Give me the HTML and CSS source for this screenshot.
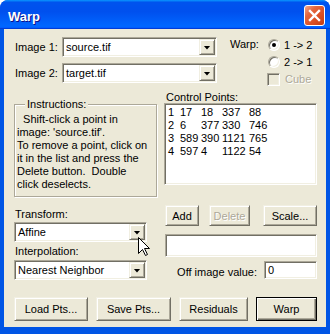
FILE: index.html
```html
<!DOCTYPE html>
<html>
	<head>
		<meta charset="UTF-8">
		<title>Warp</title>
		<link rel="stylesheet" href="styles.css">
	</head>
	<body>
		<div class="window">
			<div class="titlebar">
				<span class="title">Warp</span>
				<span class="close">
					<svg width="19" height="19" viewBox="0 0 19 19"><path d="M5 5 L14 14 M14 5 L5 14" stroke="#fff" stroke-width="2.4" stroke-linecap="square"/></svg>
				</span>
			</div>
			<div class="content">
				<div class="top">
					<div class="files">
						<div class="file-row">
							<span class="file-label">Image 1:</span>
							<div class="combo sunken file-combo"><span class="combo-text">source.tif</span><span class="combo-btn"><i></i></span></div>
						</div>
						<div class="file-row">
							<span class="file-label">Image 2:</span>
							<div class="combo sunken file-combo"><span class="combo-text">target.tif</span><span class="combo-btn"><i></i></span></div>
						</div>
					</div>
					<div class="warp-opts">
						<span class="warp-label">Warp:</span>
						<div class="opts">
							<div class="opt"><span class="radio checked"></span>1 -&gt; 2</div>
							<div class="opt"><span class="radio"></span>2 -&gt; 1</div>
							<div class="opt opt-check disabled"><span class="check"></span>Cube</div>
						</div>
					</div>
				</div>

				<div class="middle">
					<div class="col-left">
						<div class="group">
							<span class="legend">Instructions:</span>
							&nbsp;&nbsp;Shift-click a point in<br>
							image: 'source.tif'.<br>
							To remove a point, click on<br>
							it in the list and press the<br>
							Delete button.&nbsp; Double<br>
							click deselects.
						</div>
						<div class="field-label first">Transform:</div>
						<div class="combo sunken small-combo"><span class="combo-text">Affine</span><span class="combo-btn"><i></i></span></div>
						<div class="field-label">Interpolation:</div>
						<div class="combo sunken small-combo"><span class="combo-text">Nearest Neighbor</span><span class="combo-btn"><i></i></span></div>
					</div>
					<div class="col-right">
						<div class="cp-label">Control Points:</div>
						<div class="list sunken">
							<div class="list-row"><span>1</span><span>17</span><span>18</span><span>337</span><span>88</span></div>
							<div class="list-row"><span>2</span><span>6</span><span>377</span><span>330</span><span>746</span></div>
							<div class="list-row"><span>3</span><span>589</span><span>390</span><span>1121</span><span>765</span></div>
							<div class="list-row"><span>4</span><span>597</span><span>4</span><span>1122</span><span>54</span></div>
						</div>
						<div class="btn-row">
							<a class="btn btn-add" href="javascript:;">Add</a>
							<a class="btn btn-delete disabled" href="javascript:;">Delete</a>
							<a class="btn btn-scale" href="javascript:;">Scale...</a>
						</div>
						<div class="status sunken"></div>
						<div class="off-row">
							<span class="off-label">Off image value:</span>
							<div class="off-field sunken">0</div>
						</div>
					</div>
				</div>

				<div class="bottom">
					<a class="btn btn-load" href="javascript:;">Load Pts...</a>
					<a class="btn btn-save" href="javascript:;">Save Pts...</a>
					<a class="btn btn-res" href="javascript:;">Residuals</a>
					<a class="btn btn-warp default" href="javascript:;">Warp</a>
				</div>
			</div>
			<svg class="cursor" width="13" height="20" viewBox="0 0 13 20">
				<path d="M0.5 0.5 L0.5 16.5 L4.5 12.5 L7.5 18.5 L9.5 17.5 L6.5 11.5 L11.5 11.5 Z" fill="#fff" stroke="#000" stroke-width="1"/>
			</svg>
		</div>
	</body>
</html>
```

FILE: styles.css
```css
html,body {
	margin: 0;
	padding: 0;
}
body {
	background-color: #fff;
	font-family: "Liberation Sans", Arial, sans-serif;
	font-size: 11px;
	color: #000;
}
a {
	text-decoration: none;
	color: #000;
}

.window {
	position: relative;
	width: 330px;
	height: 334px;
	display: flex;
	flex-direction: column;
	background-color: #0055e5;
	border-radius: 8px 8px 0 0;
	overflow: hidden;
}
.titlebar {
	height: 29px;
	flex: none;
	display: flex;
	justify-content: space-between;
	align-items: flex-start;
	padding: 0 5px 0 8px;
	box-sizing: border-box;
	background: linear-gradient(180deg, #0997ff, #0053ee 8%, #0050ee 40%, #0066ff 88%, #0066ff 93%, #005bff 95%, #003dd7 96%, #003dd7);
}
.titlebar .title {
	font: bold 13px "Liberation Sans", Arial, sans-serif;
	color: #fff;
	padding-top: 4px;
	line-height: 25px;
	text-shadow: 1px 1px #0f1089;
}
.titlebar .close {
	margin-top: 5px;
	width: 21px;
	height: 21px;
	box-sizing: border-box;
	border: 1px solid #fff;
	border-radius: 3px;
	background: linear-gradient(135deg, #f3a88e 0%, #e4673f 30%, #db4f24 65%, #c33d10 100%);
}
.titlebar .close svg {
	display: block;
}

.content {
	flex: 1;
	margin: 0 4px 7px;
	padding: 8px 9px 0 10px;
	background-color: #ece9d8;
}

/* 3d borders */
.sunken {
	box-sizing: border-box;
	border: 1px solid;
	border-color: #aca899 #fff #fff #aca899;
	box-shadow: inset 1px 1px #716f64, inset -1px -1px #f1efe2;
	background-color: #fff;
}
.btn {
	display: flex;
	align-items: center;
	justify-content: center;
	box-sizing: border-box;
	border: 1px solid;
	border-color: #f1efe2 #716f64 #716f64 #f1efe2;
	box-shadow: inset 1px 1px #fff, inset -1px -1px #aca899;
	background-color: #ece9d8;
	white-space: nowrap;
}
.btn.default {
	border: 1px solid #000;
	box-shadow: inset 1px 1px #fff, inset -1px -1px #716f64, inset -2px -2px #aca899;
}
.disabled {
	color: #aca899;
	text-shadow: 1px 1px #fff;
}

/* combo boxes */
.combo {
	display: flex;
	align-items: center;
	height: 20px;
	padding: 1px;
}
.combo .combo-text {
	flex: 1;
	padding-left: 2px;
	white-space: nowrap;
}
.combo .combo-btn {
	width: 16px;
	height: 16px;
	display: flex;
	align-items: center;
	justify-content: center;
	box-sizing: border-box;
	border: 1px solid;
	border-color: #f1efe2 #716f64 #716f64 #f1efe2;
	box-shadow: inset 1px 1px #fff, inset -1px -1px #aca899;
	background-color: #ece9d8;
}
.combo .combo-btn i {
	width: 7px;
	height: 4px;
	margin-top: 1px;
	background-color: #000;
	clip-path: polygon(0 0, 100% 0, 50% 100%);
}
.file-combo {
	width: 155px;
}
.small-combo {
	width: 133px;
}

/* top part */
.top {
	display: flex;
	height: 54px;
}
.files {
	width: 203px;
	display: flex;
	flex-direction: column;
	gap: 6px;
}
.file-row {
	display: flex;
	align-items: center;
	height: 20px;
}
.file-label {
	width: 48px;
	padding-left: 1px;
	box-sizing: border-box;
}
.warp-opts {
	display: flex;
	margin-left: 13px;
	margin-top: -1px;
}
.warp-label {
	width: 38px;
	line-height: 17px;
}
.opt {
	display: flex;
	align-items: center;
	gap: 4px;
	height: 17px;
}
.opt-check {
	height: 18px;
	gap: 5px;
	margin-left: -1px;
}
.radio {
	position: relative;
	width: 12px;
	height: 12px;
	box-sizing: border-box;
	border: 1px solid;
	border-color: #aca899 #fff #fff #aca899;
	border-radius: 50%;
	box-shadow: inset 1px 1px #716f64, inset -1px -1px #f1efe2;
	background-color: #fff;
}
.radio.checked:after {
	content: "";
	position: absolute;
	left: 3px;
	top: 3px;
	width: 4px;
	height: 4px;
	border-radius: 50%;
	background-color: #000;
}
.check {
	width: 13px;
	height: 13px;
	box-sizing: border-box;
	border: 1px solid;
	border-color: #aca899 #fff #fff #aca899;
	box-shadow: inset 1px 1px #716f64, inset -1px -1px #f1efe2;
	background-color: #ece9d8;
}

/* middle part */
.middle {
	display: grid;
	grid-template-columns: 143px 153px;
	column-gap: 7px;
}
.group {
	position: relative;
	margin-top: 13px;
	height: 93px;
	box-sizing: border-box;
	border: 1px solid #aca899;
	box-shadow: 1px 1px #fff, inset 1px 1px #fff;
	padding: 8px 0 0 2px;
	line-height: 13px;
	white-space: nowrap;
}
.group .legend {
	position: absolute;
	top: -7px;
	left: 10px;
	padding: 0 2px;
	line-height: 12px;
	background-color: #ece9d8;
}
.field-label {
	line-height: 12px;
	margin-top: 3px;
	margin-bottom: 3px;
	padding-left: 1px;
}
.field-label.first {
	margin-top: 11px;
	margin-bottom: 2px;
}
.cp-label {
	line-height: 12px;
	padding-left: 2px;
}
.list {
	height: 82px;
	padding: 2px 0 0 3px;
	line-height: 13px;
}
.list-row {
	display: grid;
	grid-template-columns: 12px 21px 21px 27px auto;
}
.btn-row {
	display: flex;
	height: 21px;
	margin-top: 20px;
}
.btn-add {
	width: 34px;
	margin-left: 1px;
}
.btn-delete {
	width: 41px;
	margin-left: 10px;
}
.btn-scale {
	width: 54px;
	margin-left: 13px;
}
.status {
	width: 152px;
	height: 23px;
	margin: 8px 0 0 1px;
}
.off-row {
	display: flex;
	justify-content: flex-end;
	align-items: flex-end;
	height: 18px;
	margin-top: 4px;
}
.off-label {
	line-height: 13px;
	margin-right: 7px;
}
.off-field {
	width: 53px;
	height: 18px;
	padding: 1px 0 0 3px;
	line-height: 14px;
}

/* bottom buttons */
.bottom {
	display: flex;
	gap: 8px;
	height: 24px;
	margin-top: 17px;
}
.btn-load {
	width: 74px;
}
.btn-save {
	width: 75px;
}
.btn-res {
	width: 69px;
}
.btn-warp {
	width: 61px;
}

.cursor {
	position: absolute;
	left: 138px;
	top: 237px;
}
```
